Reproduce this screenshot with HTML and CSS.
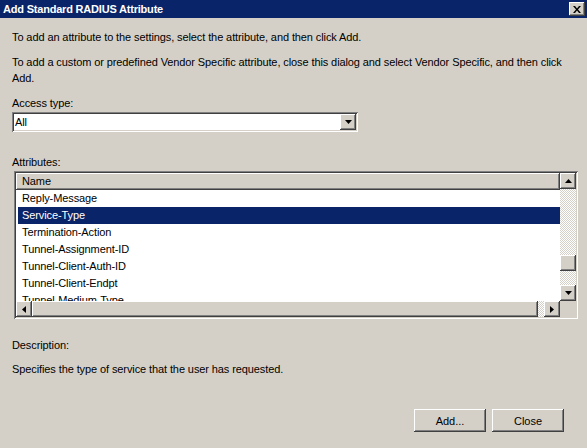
FILE: index.html
```html
<!DOCTYPE html>
<html lang="en">
<head>
    <meta charset="UTF-8">
    <title>Add Standard RADIUS Attribute</title>
    <link rel="stylesheet" href="styles.css">
</head>
<body>
    <div class="dialog">
        <div class="titlebar">
            <span class="title">Add Standard RADIUS Attribute</span>
            <span class="close-btn raised">
                <svg width="8" height="7" viewBox="0 0 8 7"><path d="M0 0h2l2 2.5 2-2.5h2l-3 3.5 3 3.5h-2l-2-2.5-2 2.5h-2l3-3.5z" fill="#000"/></svg>
            </span>
        </div>

        <div class="content">
            <p class="intro">To add an attribute to the settings, select the attribute, and then click Add.</p>
            <p class="intro wrap">To add a custom or predefined Vendor Specific attribute, close this dialog and select Vendor Specific, and then click Add.</p>

            <div class="field-label">Access type:</div>
            <div class="combo sunken">
                <span class="combo-value">All</span>
                <span class="combo-btn raised">
                    <svg width="7" height="4" viewBox="0 0 7 4"><path d="M0 0h7l-3.5 4z" fill="#000"/></svg>
                </span>
            </div>

            <div class="field-label attrs-label">Attributes:</div>
            <div class="listview sunken">
                <div class="lv-viewport">
                    <div class="lv-header raised">Name</div>
                    <ul class="lv-rows">
                        <li>Reply-Message</li>
                        <li class="selected">Service-Type</li>
                        <li>Termination-Action</li>
                        <li>Tunnel-Assignment-ID</li>
                        <li>Tunnel-Client-Auth-ID</li>
                        <li>Tunnel-Client-Endpt</li>
                        <li>Tunnel-Medium-Type</li>
                    </ul>
                </div>

                <div class="vscroll">
                    <span class="sb-btn raised">
                        <svg width="7" height="4" viewBox="0 0 7 4"><path d="M3.5 0l3.5 4h-7z" fill="#000"/></svg>
                    </span>
                    <span class="sb-track v-upper"></span>
                    <span class="sb-thumb raised"></span>
                    <span class="sb-track v-lower"></span>
                    <span class="sb-btn raised">
                        <svg width="7" height="4" viewBox="0 0 7 4"><path d="M0 0h7l-3.5 4z" fill="#000"/></svg>
                    </span>
                </div>

                <div class="hscroll">
                    <span class="sb-btn raised">
                        <svg width="4" height="7" viewBox="0 0 4 7"><path d="M4 0v7l-4-3.5z" fill="#000"/></svg>
                    </span>
                    <span class="sb-thumb h-thumb raised"></span>
                    <span class="sb-track h-rest"></span>
                    <span class="sb-btn raised">
                        <svg width="4" height="7" viewBox="0 0 4 7"><path d="M0 0v7l4-3.5z" fill="#000"/></svg>
                    </span>
                </div>

                <div class="sb-corner"></div>
            </div>

            <div class="field-label desc-label">Description:</div>
            <p class="description">Specifies the type of service that the user has requested.</p>

            <div class="actions">
                <button class="push-btn raised">Add...</button>
                <button class="push-btn raised">Close</button>
            </div>
        </div>
    </div>
</body>
</html>
```

FILE: styles.css
```css
* {
    margin: 0;
    padding: 0;
    box-sizing: border-box;
}

body {
    font-family: "Liberation Sans", Arial, sans-serif;
    font-size: 11px;
    letter-spacing: -0.1px;
    color: #000;
    background: #d4d0c8;
}

.dialog {
    width: 587px;
    height: 448px;
    background: #d4d0c8;
    overflow: hidden;
}

/* classic 3d edges */
.raised {
    background: #d4d0c8;
    box-shadow: inset -1px -1px #404040, inset 1px 1px #fff, inset -2px -2px #808080, inset 2px 2px #d4d0c8;
}

.sunken {
    box-shadow: inset 1px 1px #808080, inset -1px -1px #fff, inset 2px 2px #404040, inset -2px -2px #d4d0c8;
}

.titlebar {
    height: 18px;
    background: #0a246a;
    display: flex;
    align-items: center;
    justify-content: space-between;
    padding: 0 2px 0 3px;
}

.title {
    color: #fff;
    font-weight: bold;
    font-size: 11px;
    letter-spacing: -0.2px;
}

.close-btn {
    width: 16px;
    height: 14px;
    display: flex;
    align-items: center;
    justify-content: center;
}

.content {
    padding: 0 12px;
}

.intro {
    line-height: 16px;
    margin-top: 11px;
}

.intro.wrap {
    margin-top: 9px;
}

.field-label {
    line-height: 16px;
    margin-top: 9px;
}

.combo {
    width: 346px;
    height: 20px;
    margin-top: 1px;
    background: #fff;
    display: flex;
    align-items: center;
    justify-content: space-between;
    padding: 2px;
}

.combo-value {
    padding-left: 1px;
}

.combo-btn {
    width: 16px;
    height: 16px;
    display: flex;
    align-items: center;
    justify-content: center;
}

.attrs-label {
    margin-top: 22px;
}

.listview {
    margin: 1px 0 0 2px;
    width: 564px;
    height: 148px;
    padding: 2px;
    background: #fff;
    display: grid;
    grid-template-columns: 1fr 16px;
    grid-template-rows: 1fr 16px;
}

.lv-viewport {
    overflow: hidden;
    background: #fff;
}

.lv-header {
    height: 17px;
    line-height: 17px;
    padding-left: 6px;
}

.lv-rows {
    list-style: none;
    padding: 0 0 0 2px;
}

.lv-rows li {
    height: 17px;
    line-height: 17px;
    padding-left: 4px;
}

.lv-rows li.selected {
    background: #0a246a;
    color: #fff;
}

.vscroll {
    display: flex;
    flex-direction: column;
}

.hscroll {
    display: flex;
}

.sb-btn {
    width: 16px;
    height: 16px;
    flex: none;
    display: flex;
    align-items: center;
    justify-content: center;
}

.sb-track {
    background: repeating-conic-gradient(#d4d0c8 0 25%, #fff 0 50%) 0 0 / 2px 2px;
}

.v-upper {
    height: 66px;
}

.v-lower {
    flex: 1;
}

.sb-thumb {
    flex: none;
    width: 16px;
    height: 16px;
}

.h-thumb {
    width: auto;
    flex: 1;
}

.h-rest {
    width: 6px;
}

.sb-corner {
    background: #d4d0c8;
}

.desc-label {
    margin-top: 18px;
}

.description {
    line-height: 16px;
    margin-top: 8px;
}

.actions {
    display: flex;
    justify-content: flex-end;
    gap: 6px;
    margin-top: 32px;
    padding-right: 11px;
}

.push-btn {
    width: 72px;
    height: 23px;
    border: none;
    font-family: inherit;
    font-size: 11px;
    color: #000;
}
```
